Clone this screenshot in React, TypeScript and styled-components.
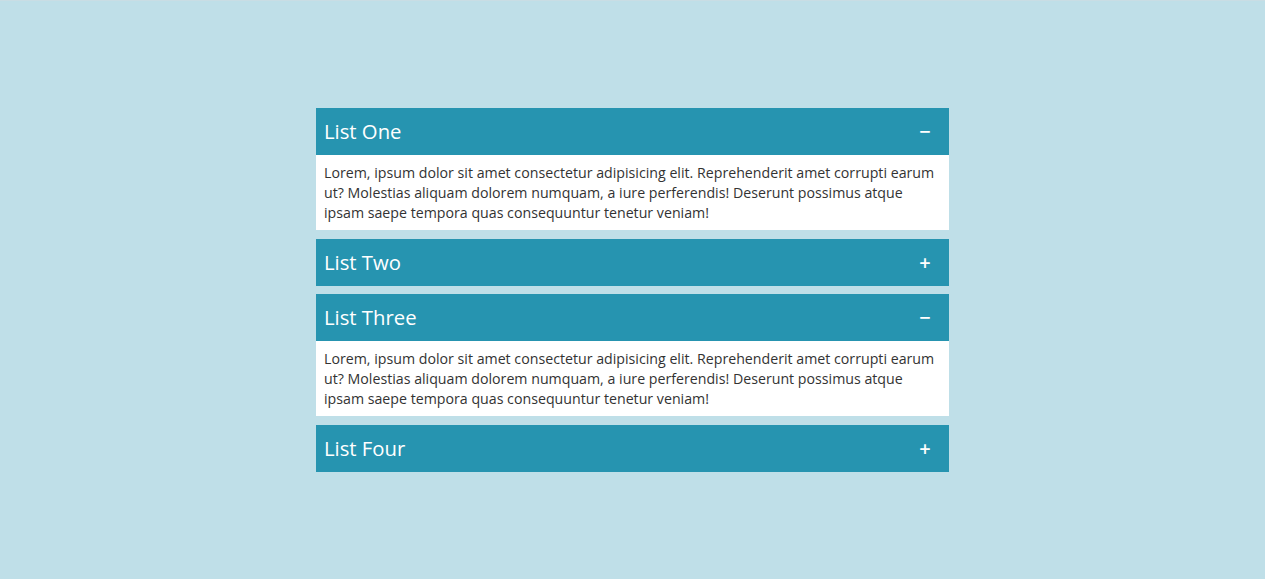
import React, { useState } from "react";
import styled, { createGlobalStyle } from "styled-components";

const Global = createGlobalStyle`
  html, body { margin: 0; padding: 0; }
  body {
    background: #bfdfe8;
    font-family: "Open Sans", "Liberation Sans", sans-serif;
    border-top: 1px solid #c9dde4;
    min-height: 578px;
  }
`;

const Page = styled.div`
  display: flex;
  justify-content: center;
  padding-top: 107px;
`;

const Accordion = styled.div`
  width: 633px;
  display: flex;
  flex-direction: column;
  gap: 8.6px;
`;

const Item = styled.div`
  display: flex;
  flex-direction: column;
`;

const Header = styled.button`
  display: flex;
  align-items: center;
  justify-content: space-between;
  height: 47px;
  padding: 0 17px 0 8px;
  border: none;
  background: #2694b0;
  color: #ffffff;
  font-family: inherit;
  font-size: 20.3px;
  cursor: pointer;
  text-align: left;
`;

const Title = styled.span`
  margin-top: -1px;
`;

const Sign = styled.span`
  font-size: 20px;
  font-weight: 600;
  width: 14px;
  text-align: center;
`;

const Body = styled.div`
  box-sizing: border-box;
  height: 75px;
  background: #ffffff;
  padding: 8px 8px 7px;
  color: #333333;
  font-size: 14.2px;
  line-height: 20px;
`;

const text =
  "Lorem, ipsum dolor sit amet consectetur adipisicing elit. Reprehenderit amet corrupti earum ut? Molestias aliquam dolorem numquam, a iure perferendis! Deserunt possimus atque ipsam saepe tempora quas consequuntur tenetur veniam!";

const items = ["List One", "List Two", "List Three", "List Four"];

export default function App() {
  const [open, setOpen] = useState<boolean[]>([true, false, true, false]);
  return (
    <>
      <Global />
      <Page>
        <Accordion>
          {items.map((t, i) => (
            <Item key={t}>
              <Header
                onClick={() =>
                  setOpen((o) => o.map((v, j) => (j === i ? !v : v)))
                }
              >
                <Title>{t}</Title>
                <Sign>{open[i] ? "−" : "+"}</Sign>
              </Header>
              {open[i] && <Body>{text}</Body>}
            </Item>
          ))}
        </Accordion>
      </Page>
    </>
  );
}
